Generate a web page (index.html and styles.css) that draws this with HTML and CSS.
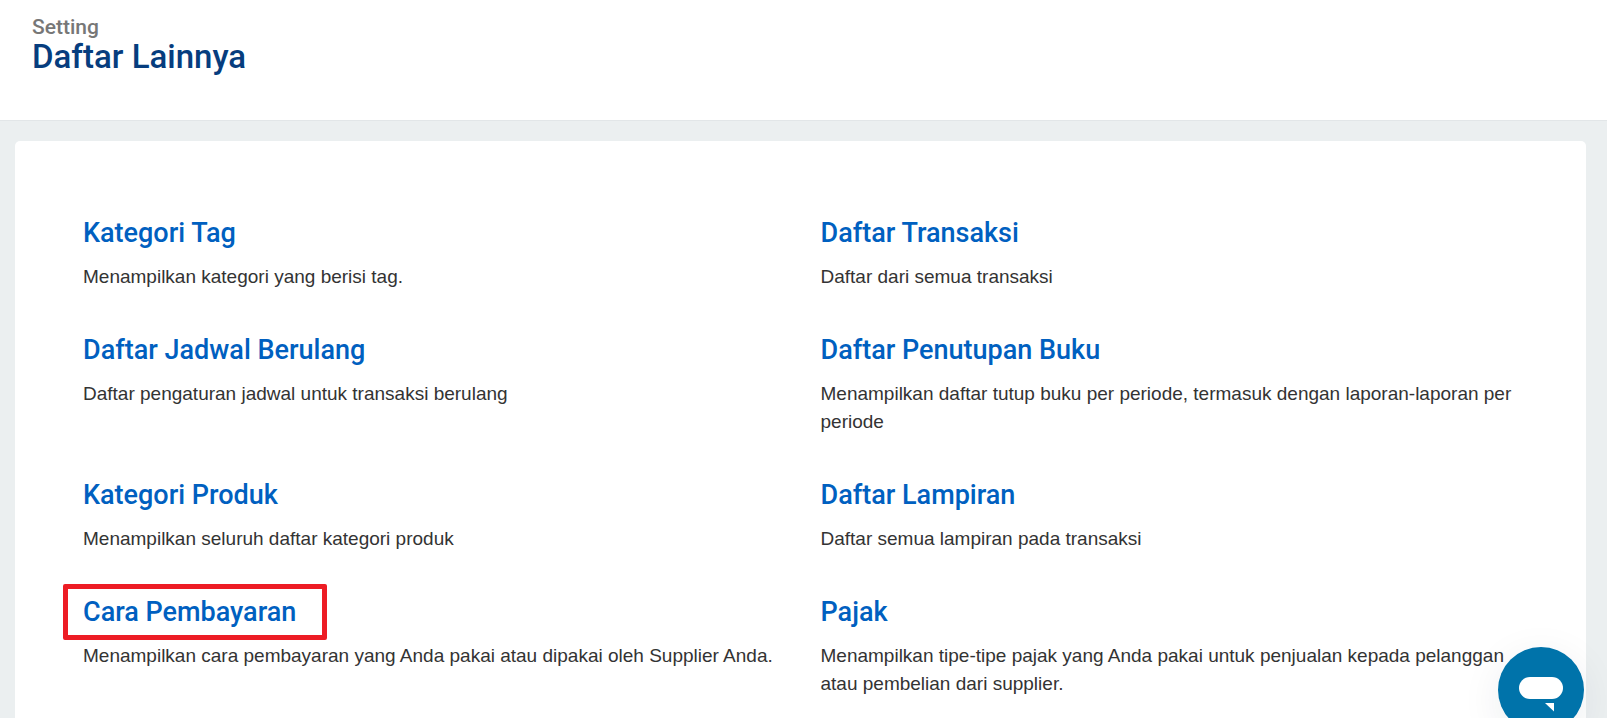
FILE: index.html
```
<!DOCTYPE html>
<html lang="id">

<head>
    <meta charset="UTF-8">
    <title>Daftar Lainnya</title>
    <link rel="stylesheet" href="styles.css">
</head>

<body>
    <header class="top">
        <p class="sti">Setting</p>
        <h1>Daftar Lainnya</h1>
    </header>

    <main class="kort">
        <section class="liste">
            <article class="punkt">
                <h2><a href="#">Kategori Tag</a></h2>
                <p>Menampilkan kategori yang berisi tag.</p>
            </article>
            <article class="punkt">
                <h2><a href="#">Daftar Transaksi</a></h2>
                <p>Daftar dari semua transaksi</p>
            </article>
            <article class="punkt">
                <h2><a href="#">Daftar Jadwal Berulang</a></h2>
                <p>Daftar pengaturan jadwal untuk transaksi berulang</p>
            </article>
            <article class="punkt">
                <h2><a href="#">Daftar Penutupan Buku</a></h2>
                <p>Menampilkan daftar tutup buku per periode, termasuk dengan laporan-laporan per periode</p>
            </article>
            <article class="punkt">
                <h2><a href="#">Kategori Produk</a></h2>
                <p>Menampilkan seluruh daftar kategori produk</p>
            </article>
            <article class="punkt">
                <h2><a href="#">Daftar Lampiran</a></h2>
                <p>Daftar semua lampiran pada transaksi</p>
            </article>
            <article class="punkt">
                <h2><a href="#" class="valgt">Cara Pembayaran</a></h2>
                <p>Menampilkan cara pembayaran yang Anda pakai atau dipakai oleh Supplier Anda.</p>
            </article>
            <article class="punkt">
                <h2><a href="#">Pajak</a></h2>
                <p>Menampilkan tipe-tipe pajak yang Anda pakai untuk penjualan kepada pelanggan atau pembelian dari supplier.</p>
            </article>
        </section>
    </main>

    <button class="chat" aria-label="Chat">
        <svg viewBox="0 0 86 86" aria-hidden="true">
            <rect x="21" y="30" width="44" height="22" rx="11" />
            <path d="M47 56h9v8.500z" />
        </svg>
    </button>
</body>

</html>
```
FILE: styles.css
```
* {
    box-sizing: border-box;
    margin: 0;
}

body {
    display: flex;
    flex-direction: column;
    height: 100vh;
    overflow: hidden;
    background-color: #ebeff0;
    color: #333;
    font-family: "Liberation Sans", Arial, sans-serif;
    font-size: 19px;
    line-height: 28px;
}

.top {
    flex: none;
    padding: 14px 32px 46px;
    background-color: #fff;
    border-bottom: 1px solid #e2e6e8;
    font-family: Roboto, sans-serif;
}

.sti {
    color: #777;
    font-size: 21px;
    font-weight: 500;
    line-height: 26px;
}

h1 {
    color: #063d7e;
    font-size: 33px;
    font-weight: 500;
    line-height: 34px;
}

.kort {
    flex: 1 0 auto;
    margin: 20px 21px 0 15px;
    padding: 72px 58px 40px 68px;
    background-color: #fff;
    border-radius: 5px 5px 0 0;
}

.liste {
    display: grid;
    grid-template-columns: 1fr 1fr;
    gap: 39px 30px;
}

h2 {
    margin-bottom: 10px;
    font-family: Roboto, sans-serif;
    font-size: 27px;
    font-weight: 500;
    line-height: 40px;
}

h2 a {
    color: #0060c0;
    text-decoration: none;
}

/* rød ramme om den valgte */
.valgt {
    position: relative;
}

.valgt::after {
    content: "";
    position: absolute;
    top: -12px;
    right: -31px;
    bottom: -12px;
    left: -20px;
    border: 5px solid #ed1c24;
    border-radius: 2px;
}

.chat {
    position: fixed;
    right: 23px;
    bottom: -15px;
    width: 86px;
    height: 86px;
    padding: 0;
    border: 0;
    border-radius: 50%;
    background-color: #0073aa;
    box-shadow: 0 10px 40px rgba(0, 40, 60, 0.08);
    cursor: pointer;
}

.chat svg {
    display: block;
    width: 100%;
    fill: #fff;
}
```
